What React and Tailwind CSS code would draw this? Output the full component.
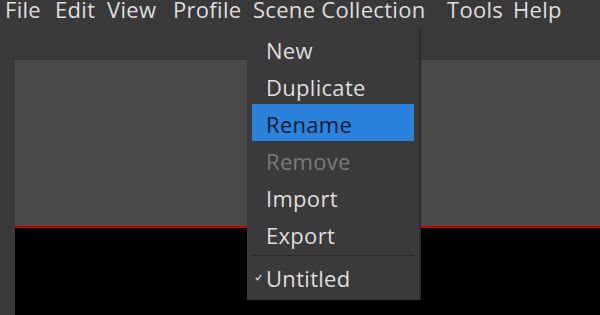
export default function App() {
  const menus = [
    { label: "File", w: "w-[50px]" },
    { label: "Edit", w: "w-[52px]" },
    { label: "View", w: "w-[66px]" },
    { label: "Profile", w: "w-[80px]" },
    { label: "Scene Collection", w: "w-[194px]" },
    { label: "Tools", w: "w-[66px]" },
    { label: "Help", w: "w-[60px]" },
  ];

  const items = [
    { label: "New" },
    { label: "Duplicate" },
    { label: "Rename", active: true },
    { label: "Remove", disabled: true },
    { label: "Import" },
    { label: "Export" },
  ];

  return (
    <div
      className="relative w-[600px] h-[315px] overflow-hidden bg-[#3a3939] text-[#dedede] tracking-[0.3px]"
      style={{ fontFamily: '"Open Sans", "Noto Sans", sans-serif' }}
    >
      {/* menu bar */}
      <div className="flex h-[30px] pl-[5px] pt-[1px] items-start text-[22px] leading-[16px]">
        {menus.map((m) => (
          <div key={m.label} className={`${m.w} whitespace-nowrap`}>
            {m.label}
          </div>
        ))}
      </div>

      {/* preview area */}
      <div className="pt-[29px] pl-[15px]">
        <div className="border-t border-[#353535]">
          <div className="h-[166px] bg-[#4a4a4a]" />
          <div className="h-[2px] bg-[#c40000]" />
          <div className="h-[100px] bg-black" />
        </div>
      </div>

      {/* dropdown */}
      <div className="absolute left-[247px] top-[28px] w-[174px] h-[272px] bg-[#3b3a3a] border-r-2 border-[#2c2c2c] pt-[2px] pl-[5px] pr-[5px] text-[22px] leading-[26px]">
        {items.map((it) => (
          <div
            key={it.label}
            className={`h-[37px] flex items-center pl-[14px] pt-[3px] ${
              it.active
                ? "bg-[#2a82da] text-[#0b1a33]"
                : it.disabled
                ? "text-[#7a7a7a]"
                : ""
            }`}
          >
            {it.label}
          </div>
        ))}
        <div className="h-[6px] flex items-center">
          <div className="w-full h-px bg-[#2a2a2a]" />
        </div>
        <div className="relative h-[37px] flex items-center pl-[14px] pt-[3px]">
          <svg
            className="absolute left-[3px] top-[16px]"
            width="7"
            height="7"
            viewBox="0 0 7 7"
          >
            <polyline
              points="0.8,3.8 2.6,5.8 6.2,0.8"
              fill="none"
              stroke="#dedede"
              strokeWidth="1.3"
            />
          </svg>
          Untitled
        </div>
      </div>
    </div>
  );
}
